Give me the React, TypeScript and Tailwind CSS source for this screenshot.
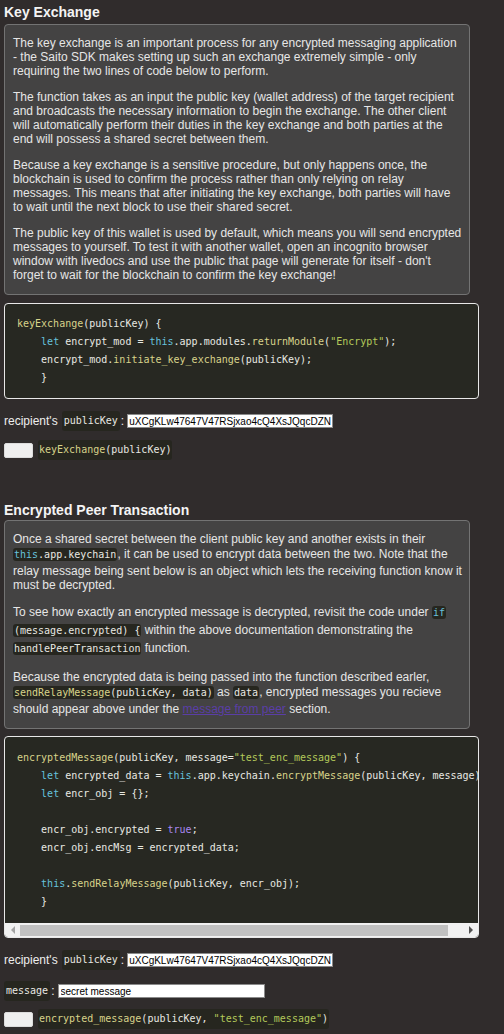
import React from "react";

const Y = "text-[#d8d38a]";
const B = "text-[#66c2dd]";
const S = "text-[#b3c95a]";
const P = "text-[#a987f0]";

function IC({ children, cls = "" }: { children: React.ReactNode; cls?: string }) {
  return (
    <code
      className={
        "rounded-[3px] bg-[#26261f] px-[1px] py-[1px] font-['DejaVu_Sans_Mono',monospace] text-[10px] leading-[18px] text-[#e8e8e2] " +
        cls
      }
    >
      {children}
    </code>
  );
}

function Scrollbar() {
  return (
    <div className="flex h-[14px] items-center bg-[#f1f1f1]">
      <div className="flex h-[14px] w-[15px] items-center justify-center">
        <div className="h-0 w-0 border-y-[4px] border-r-[4px] border-y-transparent border-r-[#a3a3a3]" />
      </div>
      <div className="h-[11px] w-[428px] bg-[#c1c1c1]" />
      <div className="flex-1" />
      <div className="flex h-[14px] w-[15px] items-center justify-center">
        <div className="h-0 w-0 border-y-[4px] border-l-[4px] border-y-transparent border-l-[#505050]" />
      </div>
    </div>
  );
}

export default function App() {
  return (
    <div className="min-h-screen bg-[#302c2c] px-[4px] pb-[8px] font-['Liberation_Sans',Arial,sans-serif] text-[12px] text-[#eeeeee]">
      <h2 className="pt-[4px] text-[14px] font-bold leading-[16px] text-[#f4f4f4]">Key Exchange</h2>
      <div className="mt-[4px] w-[466px] space-y-[12px] rounded-[4px] border border-[#737373] bg-[#444343] pb-[12px] pl-[8px] pr-[7px] pt-[11px] leading-[14px] text-[#e6e6e6]">
        <p>
          The key exchange is an important process for any encrypted messaging application - the Saito SDK makes
          setting up such an exchange extremely simple - only requiring the two lines of code below to perform.
        </p>
        <p>
          The function takes as an input the public key (wallet address) of the target recipient and broadcasts the
          necessary information to begin the exchange. The other client will automatically perform their duties in the
          key exchange and both parties at the end will possess a shared secret between them.
        </p>
        <p>
          Because a key exchange is a sensitive procedure, but only happens once, the blockchain is used to confirm the
          process rather than only relying on relay messages. This means that after initiating the key exchange, both
          parties will have to wait until the next block to use their shared secret.
        </p>
        <p>
          The public key of this wallet is used by default, which means you will send encrypted messages to yourself. To
          test it with another wallet, open an incognito browser window with livedocs and use the public that page will
          generate for itself - don't forget to wait for the blockchain to confirm the key exchange!
        </p>
      </div>

      <div className="mt-[8px] w-[475px] overflow-hidden rounded-[4px] border border-[#e8e8e8] bg-[#272822]">
        <pre className="overflow-hidden whitespace-pre px-[12px] py-[11px] font-['DejaVu_Sans_Mono',monospace] text-[10px] leading-[18px] text-[#e8e8e2]">
          <span className={Y}>keyExchange</span>(publicKey) {"{"}
          {"\n    "}
          <span className={B}>let</span> encrypt_mod = <span className={B}>this</span>.app.modules.
          <span className={Y}>returnModule</span>(<span className={S}>"Encrypt"</span>);
          {"\n    "}encrypt_mod.<span className={Y}>initiate_key_exchange</span>(publicKey);
          {"\n    }"}
        </pre>
      </div>

      <div className="mt-[14px] flex h-[16px] items-center">
        <span>recipient's</span>
        <IC cls="ml-[4px] px-[2px]">publicKey</IC>
        <span className="ml-[1px]">:</span>
        <input
          readOnly
          value="uXCgKLw47647V47RSjxao4cQ4XsJQqcDZN"
          className="ml-[3px] h-[14px] w-[206px] border border-[#8a8a8a] bg-white px-[1px] font-['Liberation_Sans',Arial,sans-serif] text-[10px] leading-[12px] text-black outline-none"
        />
      </div>

      <div className="mt-[13px] flex h-[16px] items-center">
        <button className="h-[15px] w-[29px] rounded-[2px] border border-[#dcdcdc] bg-[#efefef]" />
        <IC cls="ml-[5px]">
          <span className={Y}>keyExchange</span>(publicKey)
        </IC>
      </div>

      <h2 className="mt-[44px] text-[14px] font-bold leading-[16px] text-[#f4f4f4]">Encrypted Peer Transaction</h2>
      <div className="mt-[2px] w-[466px] space-y-[12px] rounded-[4px] border border-[#737373] bg-[#444343] pb-[12px] pl-[8px] pr-[7px] pt-[11px] leading-[14px] text-[#e6e6e6]">
        <p>
          Once a shared secret between the client public key and another exists in their{" "}
          <IC>
            <span className={B}>this</span>.app.keychain
          </IC>
          , it can be used to encrypt data between the two. Note that the relay message being sent below is an object
          which lets the receiving function know it must be decrypted.
        </p>
        <p>
          To see how exactly an encrypted message is decrypted, revisit the code under{" "}
          <IC>
            <span className={B}>if</span>
          </IC>{" "}
          <IC>(message.encrypted) {"{"}</IC> within the above documentation demonstrating the{" "}
          <IC>handlePeerTransaction</IC> function.
        </p>
        <p>
          Because the encrypted data is being passed into the function described earler,{" "}
          <IC>
            <span className={Y}>sendRelayMessage</span>(publicKey, data)
          </IC>{" "}
          as <IC>data</IC>, encrypted messages you recieve should appear above under the{" "}
          <a className="text-[#5a3ea6] underline">message from peer</a> section.
        </p>
      </div>

      <div className="mt-[7px] w-[475px] overflow-hidden rounded-[4px] border border-[#e8e8e8] bg-[#272822]">
        <pre className="overflow-hidden whitespace-pre px-[12px] pb-[12px] pt-[12px] font-['DejaVu_Sans_Mono',monospace] text-[10px] leading-[18px] text-[#e8e8e2]">
          <span className={Y}>encryptedMessage</span>(publicKey, message=<span className={S}>"test_enc_message"</span>) {"{"}
          {"\n    "}
          <span className={B}>let</span> encrypted_data = <span className={B}>this</span>.app.keychain.
          <span className={Y}>encryptMessage</span>(publicKey, message);
          {"\n    "}
          <span className={B}>let</span> encr_obj = {"{}"};{"\n\n    "}encr_obj.encrypted ={" "}
          <span className={P}>true</span>;{"\n    "}encr_obj.encMsg = encrypted_data;{"\n\n    "}
          <span className={B}>this</span>.<span className={Y}>sendRelayMessage</span>(publicKey, encr_obj);
          {"\n    }"}
        </pre>
        <Scrollbar />
      </div>

      <div className="mt-[14px] flex h-[16px] items-center">
        <span>recipient's</span>
        <IC cls="ml-[4px] px-[2px]">publicKey</IC>
        <span className="ml-[1px]">:</span>
        <input
          readOnly
          value="uXCgKLw47647V47RSjxao4cQ4XsJQqcDZN"
          className="ml-[3px] h-[14px] w-[206px] border border-[#8a8a8a] bg-white px-[1px] font-['Liberation_Sans',Arial,sans-serif] text-[10px] leading-[12px] text-black outline-none"
        />
      </div>

      <div className="mt-[15px] flex h-[16px] items-center">
        <IC cls="px-[2px]">message</IC>
        <span className="ml-[1px]">:</span>
        <input
          readOnly
          value="secret message"
          className="ml-[3px] h-[14px] w-[207px] border border-[#8a8a8a] bg-white px-[2px] font-['Liberation_Sans',Arial,sans-serif] text-[10px] leading-[12px] text-black outline-none"
        />
      </div>

      <div className="mt-[12px] flex h-[16px] items-center">
        <button className="h-[15px] w-[29px] rounded-[2px] border border-[#dcdcdc] bg-[#efefef]" />
        <IC cls="ml-[5px]">
          <span className={Y}>encrypted_message</span>(publicKey, <span className={S}>"test_enc_message"</span>)
        </IC>
      </div>
    </div>
  );
}
